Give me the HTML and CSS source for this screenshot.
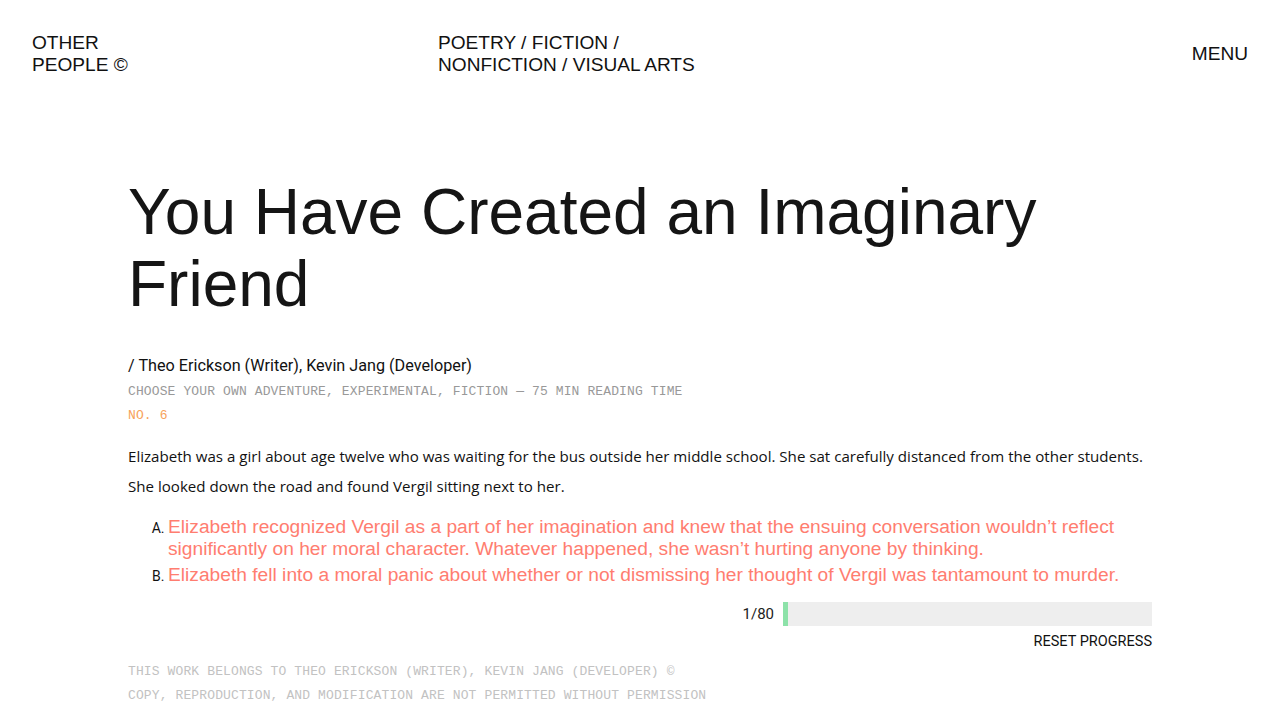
FILE: index.html
```html
<!DOCTYPE html>
<html>
<head>
<meta charset="utf-8">
<link rel="stylesheet" href="styles.css">
</head>
<body>
<header class="site-header">
  <div class="brand">OTHER<br>PEOPLE ©</div>
  <nav class="sections">POETRY / FICTION /<br>NONFICTION / VISUAL ARTS</nav>
  <div class="menu">MENU</div>
</header>
<main class="article">
  <h1 class="title">You Have Created an Imaginary Friend</h1>
  <div class="byline">/ Theo Erickson (Writer), Kevin Jang (Developer)</div>
  <div class="tags">CHOOSE YOUR OWN ADVENTURE, EXPERIMENTAL, FICTION — 75 MIN READING TIME</div>
  <div class="issue">NO. 6</div>
  <p class="passage">Elizabeth was a girl about age twelve who was waiting for the bus outside her middle school. She sat carefully distanced from the other students. She looked down the road and found Vergil sitting next to her.</p>
  <ol class="choices">
    <li>Elizabeth recognized Vergil as a part of her imagination and knew that the ensuing conversation wouldn’t reflect significantly on her moral character. Whatever happened, she wasn’t hurting anyone by thinking.</li>
    <li>Elizabeth fell into a moral panic about whether or not dismissing her thought of Vergil was tantamount to murder.</li>
  </ol>
  <div class="progress">
    <span class="count">1/80</span>
    <div class="bar"><div class="fill" style="width:1.25%"></div></div>
  </div>
  <div class="reset">RESET PROGRESS</div>
  <footer class="notice">
    <div>THIS WORK BELONGS TO THEO ERICKSON (WRITER), KEVIN JANG (DEVELOPER) ©</div>
    <div>COPY, REPRODUCTION, AND MODIFICATION ARE NOT PERMITTED WITHOUT PERMISSION</div>
  </footer>
</main>
</body>
</html>
```
FILE: styles.css
```css
* { box-sizing: border-box; }
html, body { margin: 0; padding: 0; background: #fff; }
body {
  font-family: "Liberation Sans", Arial, sans-serif;
  color: #111;
}
.site-header {
  display: flex;
  align-items: center;
  padding: 32px 32px 0 32px;
  font-size: 19.1px;
  line-height: 22px;
  color: #111;
}
.brand { width: 406px; }
.sections { flex: 1; }
.title {
  margin: 0;
  font-weight: 400;
  font-size: 64px;
  line-height: 72px;
  color: #151515;
}
.article {
  width: 1024px;
  margin: 0 0 0 128px;
  padding-top: 100px;
}
.byline {
  margin-top: 35px;
  font-family: Roboto, sans-serif;
  font-size: 16.2px;
  line-height: 22px;
  color: #111;
}
.tags, .issue {
  font-family: "Liberation Mono", monospace;
  font-size: 13px;
  line-height: 24px;
  letter-spacing: 0.12px;
  color: #999;
}
.tags { margin-top: 3px; }
.issue { color: #f7a25a; }
.passage {
  margin: 13px 0 0 0;
  font-family: "Open Sans", sans-serif;
  font-size: 15.1px;
  line-height: 30px;
  color: #111;
}
.choices {
  margin: 15px 0 0 0;
  padding-left: 40px;
  list-style: upper-alpha;
  color: #ff7d70;
  font-size: 19.2px;
  line-height: 22px;
}
.choices li { margin-bottom: 4px; }
.choices li::marker {
  font-family: Roboto, sans-serif;
  font-size: 14px;
  color: #111;
}
.progress {
  display: flex;
  align-items: center;
  justify-content: flex-end;
  gap: 9px;
  margin-top: 16px;
}
.count {
  font-family: Roboto, sans-serif;
  font-size: 15px;
  color: #222;
}
.bar {
  width: 369px;
  height: 24px;
  background: #eeeeee;
}
.fill {
  height: 100%;
  background: #8de2a9;
  min-width: 4px;
}
.reset {
  text-align: right;
  font-family: Roboto, sans-serif;
  font-size: 14.5px;
  line-height: 18px;
  margin-top: 7px;
  color: #111;
}
.notice {
  margin-top: 9px;
  font-family: "Liberation Mono", monospace;
  font-size: 13px;
  line-height: 24px;
  letter-spacing: 0.12px;
  color: #c2c2c2;
}
```
